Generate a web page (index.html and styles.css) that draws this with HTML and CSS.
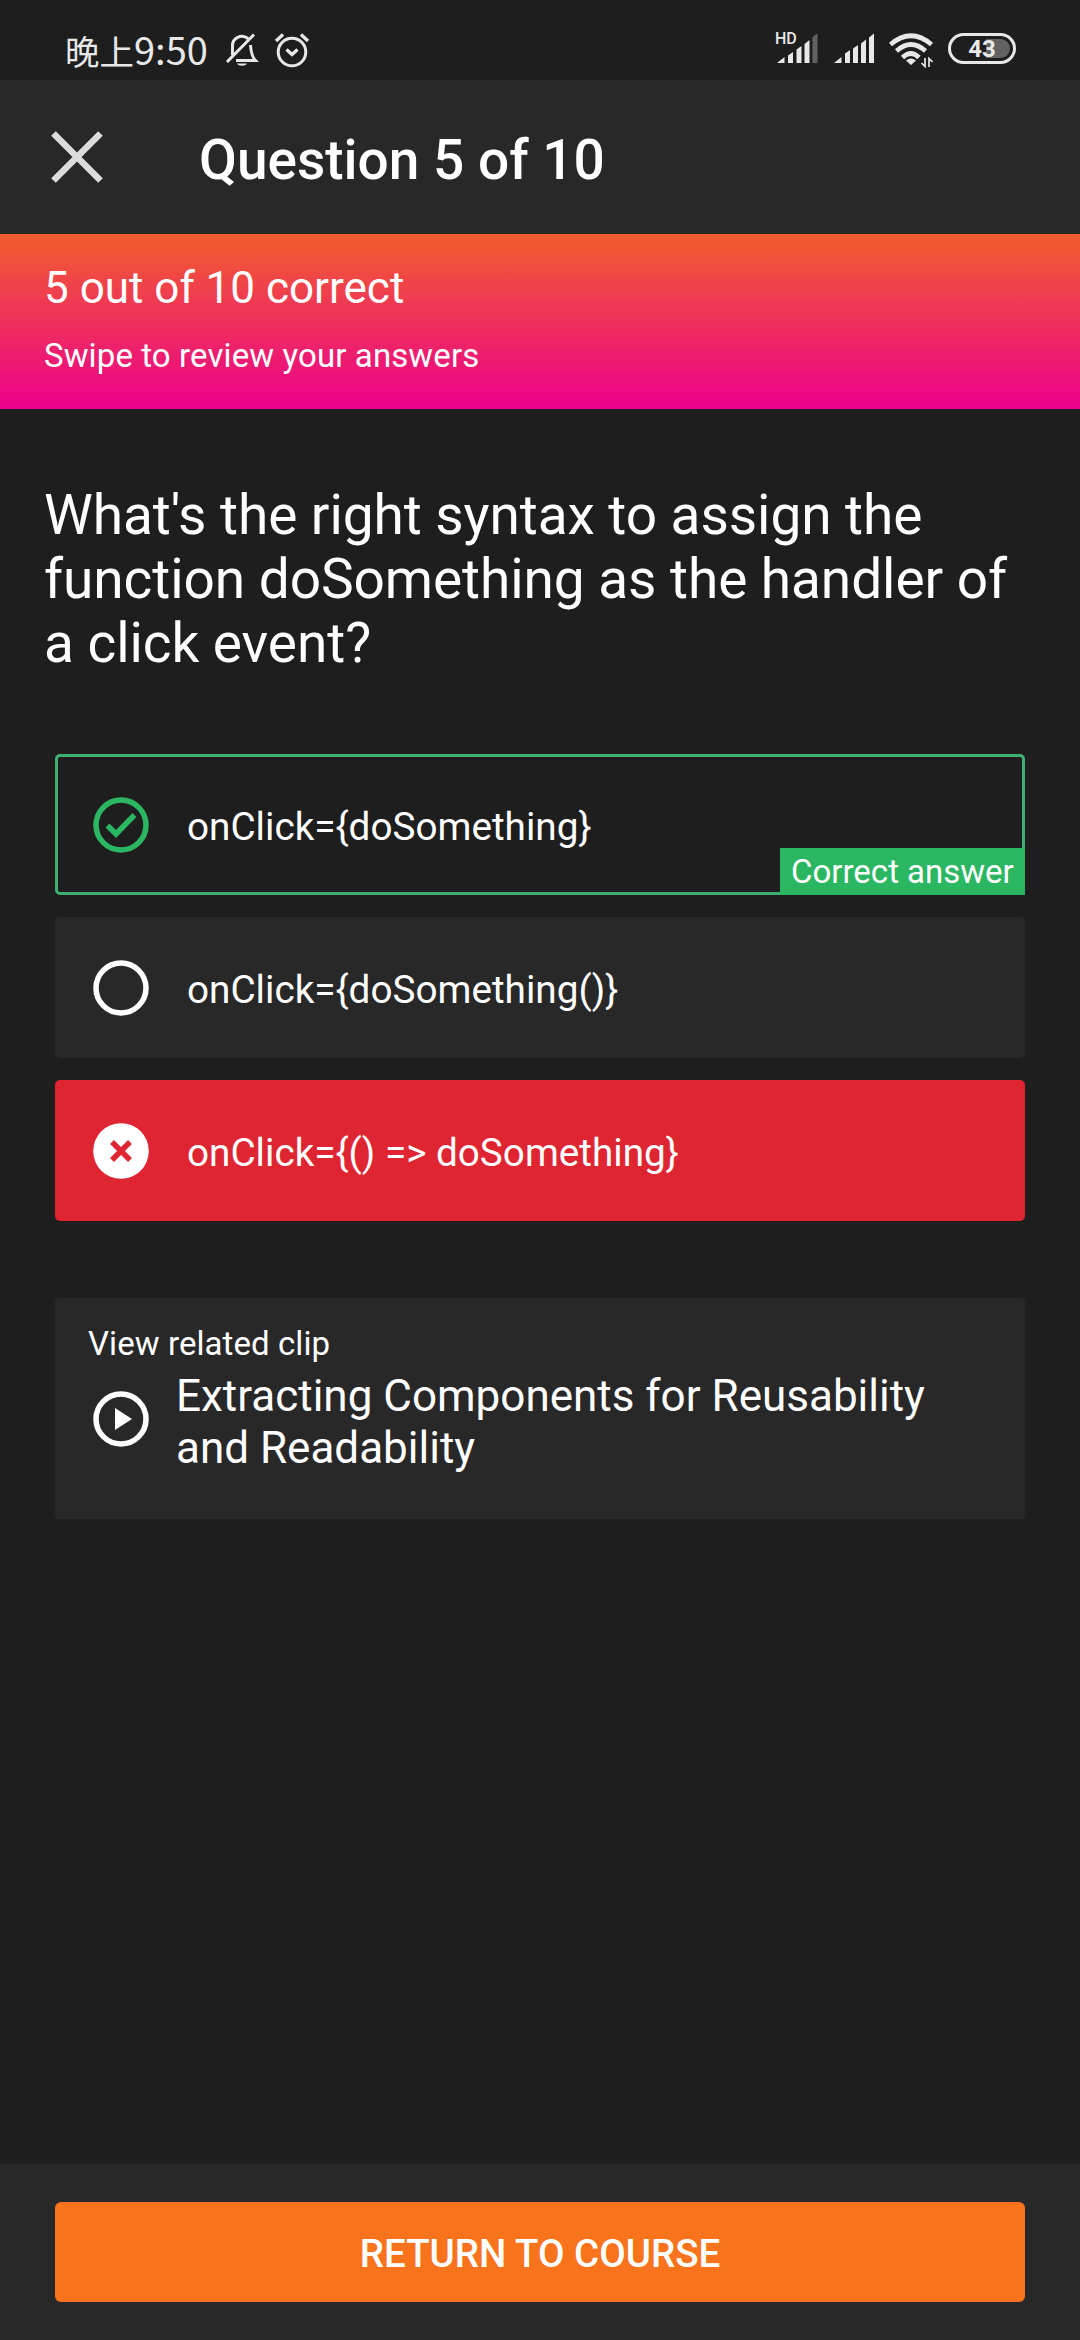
FILE: index.html
```html
<!DOCTYPE html>
<html lang="en">
<head>
<meta charset="utf-8">
<title>Question 5 of 10</title>
<link rel="stylesheet" href="styles.css">
</head>
<body>
<div class="screen">
  <div class="status">
    <div class="clock"><span class="period">晚上</span>9:50</div>
    <svg class="bell" width="34" height="36" viewBox="0 0 34 36" fill="none" stroke="#e8e8e8" stroke-width="3">
      <path d="M7.500 23V14.500A9.500 9.500 0 0 1 23 6.500M25.500 13C26 21 27 25 30.500 28.500H11M2 30L29 2.500"/>
      <path d="M12 31.500h10c-1.500 3-8.500 3-10 0z" fill="#e8e8e8" stroke="none"/>
    </svg>
    <svg class="alarm" width="36" height="36" viewBox="0 0 36 36" fill="none" stroke="#e8e8e8" stroke-width="3">
      <circle cx="18" cy="20" r="13.800"/>
      <path d="M12.500 17.500L18 22.500L23.500 17.500M2 9L9 2.500M27 2.500L34 9" stroke-width="3.300"/>
    </svg>
    <div class="spacer"></div>
    <svg class="signal-hd" width="44" height="40" viewBox="-2 -6 44 40" fill="#e8e8e8">
      <text x="-1" y="12.300" class="hd">HD</text>
      <path d="M1 31L8.500 25V31zM12 23.500L17 20V31H12zM20.500 17.500L25.500 14V31H20.500zM28.500 12L33.500 8V31H28.500z"/>
      <path d="M36.500 5L41.500 1.500V31H36.500z" fill="#626262"/>
    </svg>
    <svg class="signal" width="42" height="34" viewBox="0 0 42 34" fill="#e8e8e8">
      <path d="M1 31L8.500 25V31zM12 21.500L17 18V31H12zM20 16.500L25 13V31H20zM28 11.500L33 7.500V31H28zM36 5.500L41 1.500V31H36z"/>
    </svg>
    <svg class="wifi" width="44" height="36" viewBox="0 0 44 36" fill="none" stroke="#e8e8e8" stroke-width="4.600">
      <path d="M1.500 12.500Q22 -5 42.500 12.500M7.500 19Q22 6 36.500 19M13.500 25.500Q22 17.500 30 25.500"/>
      <path d="M17 28.500Q22 24.500 27 28.500L22 33z" fill="#e8e8e8" stroke="none"/>
      <path d="M36 26V34.500L32.500 31M40 35V26.500L43.500 30" stroke-width="1.700"/>
    </svg>
    <div class="battery"><span>43</span></div>
  </div>

  <header class="bar">
    <svg class="close" width="52" height="52" viewBox="0 0 52 52" stroke="#dcdcdc" stroke-width="6.500"><path d="M2.500 2.500L49.500 49.500M49.500 2.500L2.500 49.500"/></svg>
    <h1>Question 5 of 10</h1>
  </header>

  <section class="result">
    <div class="score">5 out of 10 correct</div>
    <div class="hint">Swipe to review your answers</div>
  </section>

  <main class="content">
    <p class="question">What's the right syntax to assign the function doSomething as the handler of a click event?</p>
    <div class="answers">
      <div class="card correct">
        <svg class="mark" viewBox="0 0 56 56" fill="none" stroke="#2bb662"><circle cx="28" cy="28" r="25" stroke-width="5.500"/><path d="M14.500 28.500L23 37L41.500 18" stroke-width="5.500"/></svg>
        <span>onClick={doSomething}</span>
        <div class="badge">Correct answer</div>
      </div>
      <div class="card">
        <svg class="mark" viewBox="0 0 56 56" fill="none" stroke="#fff"><circle cx="28" cy="28" r="25" stroke-width="5.500"/></svg>
        <span>onClick={doSomething()}</span>
      </div>
      <div class="card wrong">
        <svg class="mark" viewBox="0 0 56 56"><circle cx="28" cy="28" r="27.800" fill="#fff"/><path d="M19 19L37 37M37 19L19 37" stroke="#df2531" stroke-width="5.500"/></svg>
        <span>onClick={() =&gt; doSomething}</span>
      </div>
    </div>
    <div class="clip">
      <div class="clip-label">View related clip</div>
      <div class="clip-row">
        <svg class="mark" viewBox="0 0 56 56"><circle cx="28" cy="28" r="25" fill="none" stroke="#fff" stroke-width="5.500"/><path d="M22 17L39 28L22 39z" fill="#fff"/></svg>
        <div class="clip-title">Extracting Components for Reusability and Readability</div>
      </div>
    </div>
  </main>

  <footer class="footer"><div class="button">RETURN TO COURSE</div></footer>
</div>
</body>
</html>
```

FILE: styles.css
```css
* { box-sizing: border-box; }
body { margin: 0; background: #1e1e1e; color: #fff; font-family: Roboto, sans-serif; }
.screen { width: 1080px; height: 2340px; display: flex; flex-direction: column; overflow: hidden; }
svg { display: block; flex: none; }

.status { height: 80px; flex: none; display: flex; align-items: flex-start; padding: 0 64px 0 65px; color: #e8e8e8; }
.clock { height: 80px; width: 143px; line-height: 97px; font-family: "Noto Sans CJK SC", sans-serif; font-size: 38px; white-space: nowrap; }
.period { font-size: 34.500px; }
.bell { margin: 32px 0 0 17px; }
.alarm { margin: 32px 0 0 15px; }
.spacer { flex: 1; }
.hd { font: 500 16px Roboto, sans-serif; }
.signal-hd { margin: 26px 15px 0 0; }
.signal { margin: 32px 14px 0 0; }
.wifi { margin: 32px 15px 0 0; }
.battery { width: 68px; height: 31px; margin-top: 33px; border: 3px solid #e8e8e8; border-radius: 16px; padding: 3px; display: flex; }
.battery span { flex: 1; border-radius: 10px; background: linear-gradient(90deg, transparent 57%, #626262 57%); text-align: center; font-size: 24px; line-height: 20px; font-weight: 700; }

.bar { height: 154px; flex: none; background: #282828; display: flex; align-items: center; padding-left: 51px; }
.bar h1 { margin: 5px 0 0 96px; font-size: 55px; font-weight: 500; line-height: 64px; white-space: nowrap; }

.result { height: 175px; flex: none; padding: 27px 44px 0; background: linear-gradient(#f15f2d, #ec008c); }
.score { font-size: 44px; line-height: 54px; }
.hint { font-size: 33px; line-height: 40px; margin-top: 21px; letter-spacing: .11px; }

.content { flex: 1; padding: 74px 55px 0; }
.question { margin: 0 -11px; font-size: 55px; line-height: 64px; letter-spacing: -.07px; }
.answers { display: flex; flex-direction: column; gap: 22px; margin-top: 79px; }
.card { position: relative; height: 141px; display: flex; align-items: center; padding-left: 38px; border-radius: 5px; background: #282828; font-size: 38.700px; line-height: 46px; }
.card > span { margin: 4px 0 0 38px; white-space: pre; }
.mark { width: 56px; height: 56px; }
.correct { background: none; border: 3px solid #3fb073; padding-left: 35px; }
.wrong { background: #df2531; }
.badge { position: absolute; right: -3px; bottom: -3px; width: 245px; height: 47px; padding-left: 11px; background: #2bb662; font-size: 33px; line-height: 47px; white-space: nowrap; }

.clip { height: 221px; margin-top: 77px; padding: 25px 33px; background: #292829; border-radius: 4px; }
.clip-label { font-size: 33px; line-height: 42px; letter-spacing: .08px; }
.clip-row { display: flex; align-items: flex-start; gap: 27px; padding-left: 5px; margin-top: 5px; }
.clip-row .mark { margin-top: 21px; }
.clip-title { font-size: 44px; line-height: 52px; }

.footer { height: 176px; flex: none; padding: 38px 55px; background: #282828; }
.button { height: 100px; border-radius: 6px; background: #f9731c; text-align: center; font-size: 38.500px; font-weight: 500; line-height: 103px; }
```
